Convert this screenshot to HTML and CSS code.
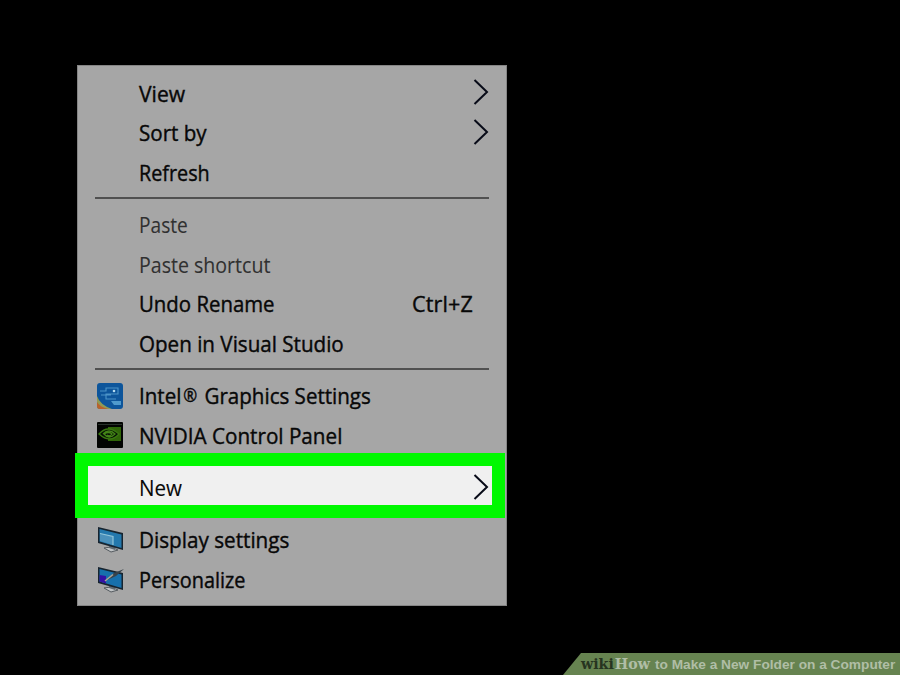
FILE: index.html
```html
<!DOCTYPE html>
<html lang="en">
<head>
  <meta charset="UTF-8" />
  <meta name="viewport" content="width=device-width, initial-scale=1.0" />
  <title>How to Make a New Folder on a Computer</title>
  <link rel="stylesheet" href="styles.css">
</head>
<body>
  <ul class="menu">
    <li class="item"><span class="label view">View</span><svg class="arrow" viewBox="0 0 16 26"><path d="M1.5 1 L14 13 L1.5 25" /></svg></li>
    <li class="item"><span class="label sort">Sort by</span><svg class="arrow" viewBox="0 0 16 26"><path d="M1.5 1 L14 13 L1.5 25" /></svg></li>
    <li class="item"><span class="label refresh">Refresh</span></li>
    <li class="separator"></li>
    <li class="item disabled"><span class="label paste">Paste</span></li>
    <li class="item disabled"><span class="label shortcut">Paste shortcut</span></li>
    <li class="item"><span class="label undo">Undo Rename</span><span class="keys">Ctrl+Z</span></li>
    <li class="item"><span class="label studio">Open in Visual Studio</span></li>
    <li class="separator"></li>
    <li class="item">
      <svg class="icon" viewBox="0 0 28 28">
        <rect x="1" y="1" width="26" height="26" rx="3" fill="#0d559b" />
        <path d="M1 14 Q4 23 16 27 H4 Q1 27 1 24Z" fill="#8f9a55" />
        <path d="M1 20 Q4 25 12 27 H4 Q1 27 1 24Z" fill="#b9622c" />
        <path d="M4 9 H10 V6 H22 V12 H10 V17 H20 M5 13 H15" fill="none" stroke="#4d94c8" stroke-width="1.1" />
        <path d="M15 19 H25 V23 H18Z" fill="#4f9acd" />
        <circle cx="18" cy="9" r="1.3" fill="#b5dcf0" />
      </svg>
      <span class="label intel">Intel<span class="reg">®</span> Graphics Settings</span>
    </li>
    <li class="item">
      <svg class="icon" viewBox="0 0 28 28">
        <rect x="1" y="1" width="26" height="26" rx="1" fill="#020402" />
        <path d="M12 6 H25 V20 H12Z" fill="#2f6508" />
        <path d="M3 13 Q12 3 23 13 Q14 23 3 13Z" fill="#071305" stroke="#3a7810" stroke-width="1.4" />
        <path d="M7 13 Q13 7 19 13 Q13 19 8 13 Q13 10 16 13 Q14 16 11 14" fill="none" stroke="#438516" stroke-width="1.3" />
        <path d="M2 3.5 H26" stroke="#28312a" stroke-width="1" />
      </svg>
      <span class="label nvidia">NVIDIA Control Panel</span>
    </li>
    <li class="separator"></li>
    <li class="item selected"><span class="label new">New</span><svg class="arrow" viewBox="0 0 16 26"><path d="M1.5 1 L14 13 L1.5 25" /></svg></li>
    <li class="separator"></li>
    <li class="item">
      <svg class="icon" viewBox="0 0 28 28">
        <path d="M8 22 L15 21 L22 24 L15 26Z" fill="#c0c4c6" stroke="#555b60" stroke-width="1" />
        <path d="M13 18 L19 20 V24 L13 22Z" fill="#606970" />
        <path d="M2 1 L27 7 V24 L2 17Z" fill="#17242f" />
        <path d="M3.5 3 L25.5 8.5 V22 L3.5 15.5Z" fill="#2378ad" />
        <path d="M4 7.5 L17 10.5 V19 L4 15Z" fill="#4b91bb" />
        <path d="M4 7.5 L17 10.5 V19" fill="none" stroke="#91c5d9" stroke-width="1.2" />
      </svg>
      <span class="label display">Display settings</span>
    </li>
    <li class="item">
      <svg class="icon" viewBox="0 0 28 28">
        <path d="M8 22 L15 21 L22 24 L15 26Z" fill="#c0c4c6" stroke="#555b60" stroke-width="1" />
        <path d="M13 18 L19 20 V24 L13 22Z" fill="#606970" />
        <path d="M2 1 L27 7 V24 L2 17Z" fill="#17242f" />
        <path d="M3.5 3 L25.5 8.5 V22 L3.5 15.5Z" fill="#1770ac" />
        <path d="M3.5 9 L10 10 V17.5 L3.5 15.5Z" fill="#3411a5" />
        <path d="M9 15 L18 7 L28 3 L20 10Z" fill="#38434a" />
        <path d="M9 15 L17 8.5" stroke="#a8a59a" stroke-width="1.6" />
      </svg>
      <span class="label personalize">Personalize</span>
    </li>
  </ul>

  <footer class="banner"><span class="wiki">wiki</span><span class="how">How</span><span class="title">to Make a New Folder on a Computer</span></footer>
</body>
</html>
```
FILE: styles.css
```css
* {
  margin: 0;
  padding: 0;
  box-sizing: border-box;
}

body {
  height: 675px;
  display: flex;
  flex-direction: column;
  justify-content: space-between;
  overflow: hidden;
  background: #000;
  font-family: "Open Sans", "Noto Sans", sans-serif;
}

.menu {
  width: 430px;
  height: 541px;
  margin: 65px 0 0 77px;
  padding: 8px 0 0;
  list-style: none;
  background: #a6a6a6;
  border: 1px solid #858585;
}

.item {
  position: relative;
  display: flex;
  align-items: center;
  height: 39.6px;
  padding: 0 17px 0 60.5px;
  font-size: 21.5px;
  color: #080808;
  white-space: nowrap;
}

.disabled {
  color: #303030;
}

.label,
.keys {
  margin-top: -1.2px;
  -webkit-text-stroke: 0.4px currentColor;
}

.label {
  transform-origin: left center;
}

.disabled .label,
.selected .label {
  -webkit-text-stroke: 0.1px currentColor;
}

/* Open Sans runs wider than Segoe UI */
.view { transform: scaleX(0.98); }
.sort { transform: scaleX(0.957); }
.refresh { transform: scaleX(0.92); }
.paste { transform: scaleX(0.89); }
.shortcut { transform: scaleX(0.91); }
.undo { transform: scaleX(0.948); }
.studio { transform: scaleX(0.958); }
.intel { transform: scaleX(0.956); }
.nvidia { transform: scaleX(0.962); }
.new { transform: scaleX(0.957); }
.display { transform: scaleX(0.962); }
.personalize { transform: scaleX(0.925); }

.reg {
  margin: 0 2px;
  font-size: 17.5px;
  line-height: 1;
  vertical-align: 2px;
}

.icon {
  flex: none;
  width: 28px;
  height: 28px;
  margin: -1px 15px 0 -42.5px;
}

.arrow {
  width: 16px;
  height: 26px;
  margin-left: auto;
  margin-top: -3px;
  fill: none;
  stroke: #080b18;
  stroke-width: 2;
}

.keys {
  margin-left: auto;
  margin-right: 16px;
  letter-spacing: 0.15px;
}

.separator {
  height: 12.7px;
  margin: 0 17px;
  padding-top: 4.4px;
}

.separator::before {
  content: "";
  display: block;
  height: 2px;
  background: #505050;
}

.selected {
  margin: 0 14px 0 10px;
  padding: 0 3px 0 50.5px;
  background: #f0f0f0;
  box-shadow: 0 -3px 0 #f0f0f0;
}

/* green highlight around the New entry */
.selected::after {
  content: "";
  position: absolute;
  inset: -15px -13px -10px;
  border: 13px solid #00f800;
}

.banner {
  display: flex;
  align-items: center;
  width: 337px;
  height: 22px;
  margin-left: auto;
  padding-left: 18px;
  background: #668350;
  clip-path: polygon(18px 0, 100% 0, 100% 100%, 0 100%);
  font-family: "Liberation Sans", Arial, sans-serif;
  font-size: 13.7px;
  font-weight: bold;
  color: #b0bea6;
  white-space: nowrap;
}

.wiki,
.how {
  font-family: "DejaVu Serif", serif;
  font-size: 14.2px;
}

.wiki {
  color: #263420;
}

.how {
  margin-left: 1px;
}

.title {
  margin-left: 5px;
}
```
